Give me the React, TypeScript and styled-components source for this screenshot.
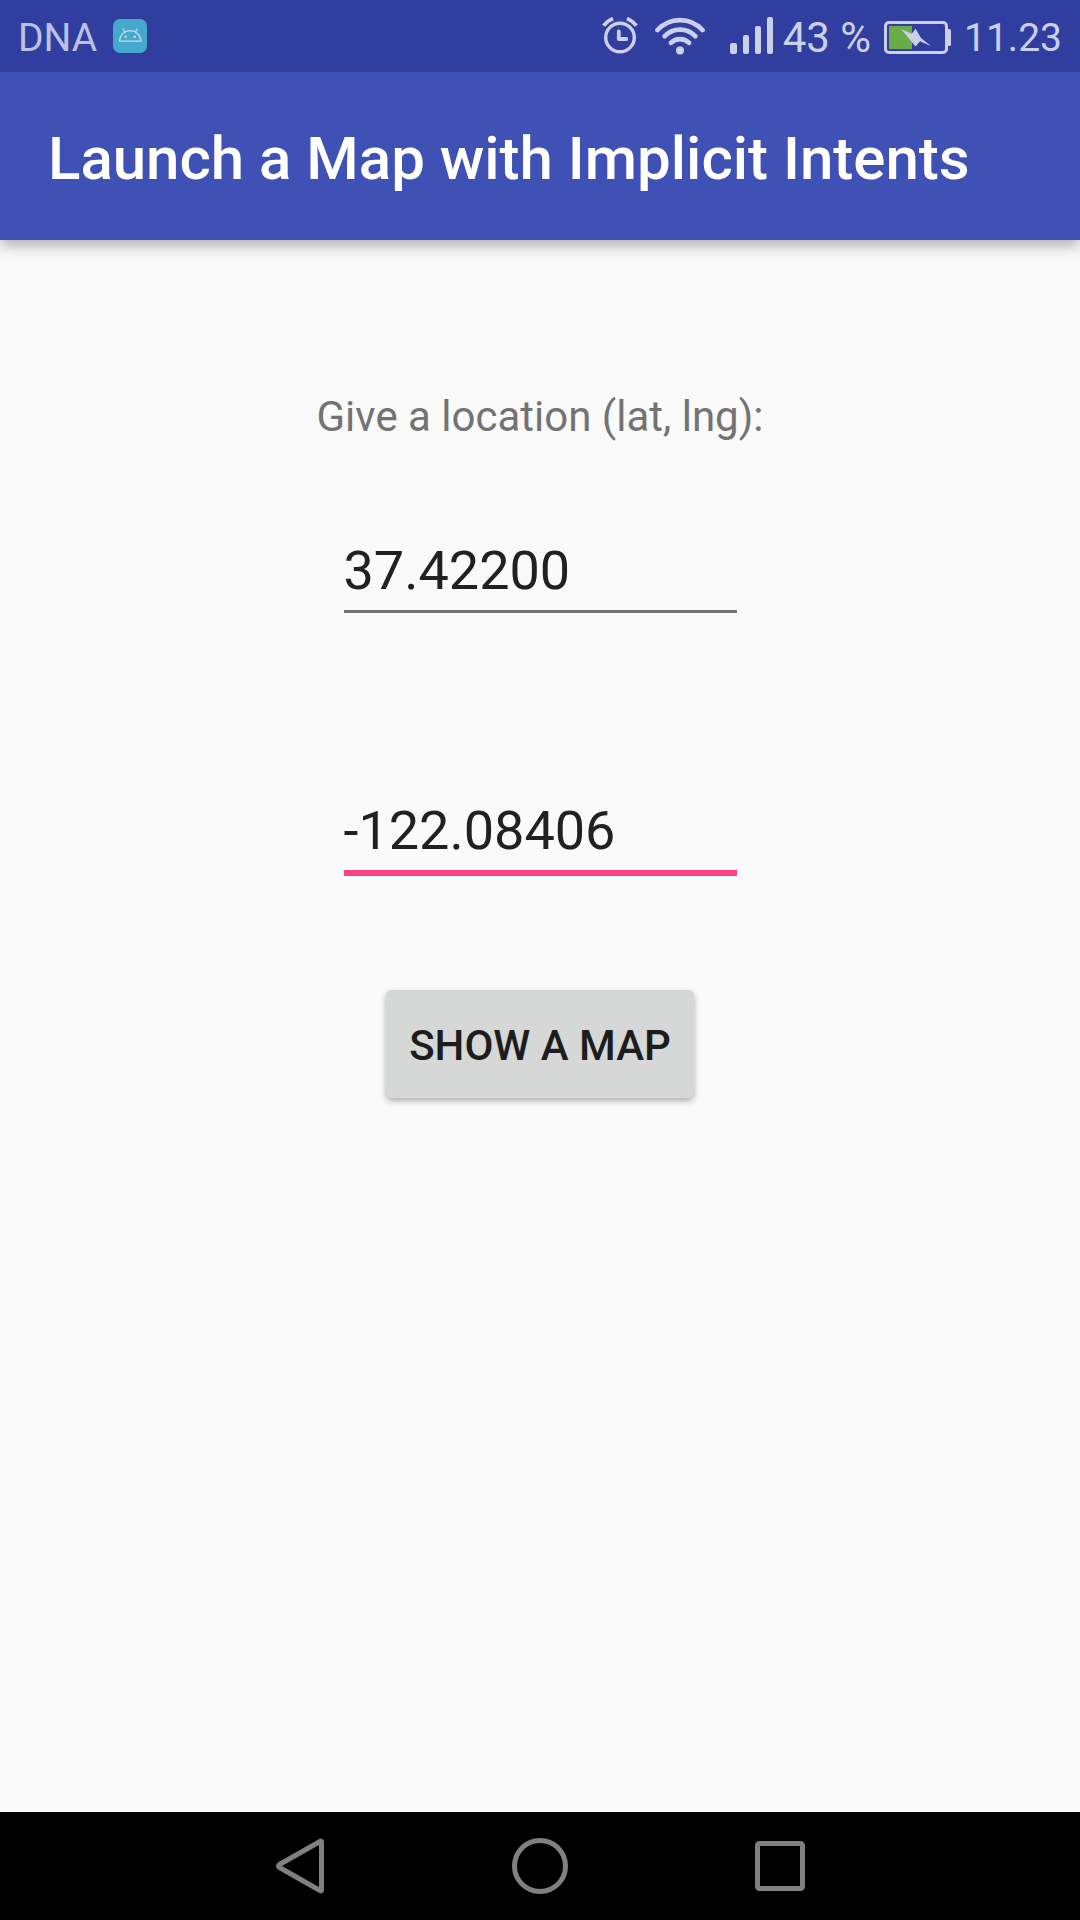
import React, { useState } from "react";
import styled, { createGlobalStyle } from "styled-components";

const GlobalStyle = createGlobalStyle`
  *, *::before, *::after { box-sizing: border-box; }
  body {
    margin: 0;
    background: #fafafa;
    font-family: Roboto, "Noto Sans", sans-serif;
  }
`;

const Screen = styled.div`
  display: flex;
  flex-direction: column;
  min-height: 100vh;
`;

const StatusBar = styled.div`
  position: relative;
  z-index: 1;
  display: flex;
  align-items: center;
  justify-content: space-between;
  height: 72px;
  padding: 0 18px;
  background: #303f9f;
  color: #cbcfe7;
`;

const StatusGroup = styled.div<{ $gap: number }>`
  display: flex;
  align-items: center;
  gap: ${(p) => p.$gap}px;
`;

const StatusText = styled.span<{ $size: number; $dim?: boolean }>`
  padding-top: 4px;
  font-size: ${(p) => p.$size}px;
  line-height: 48px;
  white-space: nowrap;
  color: ${(p) => (p.$dim ? "#bcc1e2" : "#cbcfe7")};
`;

const AppBar = styled.header`
  display: flex;
  align-items: center;
  height: 168px;
  padding: 6px 48px 0;
  background: #3f51b5;
  box-shadow: 0 5px 14px rgba(0, 0, 0, 0.32);
`;

const Title = styled.h1`
  margin: 0;
  font-size: 60px;
  font-weight: 500;
  line-height: 72px;
  color: #fff;
`;

const Form = styled.form`
  display: flex;
  flex: 1;
  flex-direction: column;
  align-items: center;
  padding-top: 153px;
`;

const Label = styled.label`
  margin-bottom: 98px;
  font-size: 42px;
  line-height: 48px;
  color: #737373;
`;

const Field = styled.input<{ $active?: boolean; $space: number }>`
  width: 393px;
  height: ${(p) => (p.$active ? 77 : 74)}px;
  margin: 0 0 ${(p) => p.$space}px;
  padding: 0 0 9px;
  border: 0;
  border-bottom: ${(p) => (p.$active ? "6px solid #ff4081" : "3px solid #737373")};
  border-radius: 0;
  outline: none;
  background: transparent;
  font-family: inherit;
  font-size: 54px;
  line-height: 62px;
  color: #212121;
`;

const RaisedButton = styled.button`
  height: 108px;
  padding: 4px 23px 0;
  border: 0;
  border-radius: 6px;
  background: #d6d7d7;
  box-shadow: 0 3px 6px rgba(0, 0, 0, 0.3);
  font-family: inherit;
  font-size: 42px;
  font-weight: 500;
  line-height: 48px;
  color: #1d1d1d;
`;

const NavBar = styled.nav`
  display: grid;
  grid-template-columns: repeat(3, 1fr);
  height: 108px;
  padding: 0 calc(100% / 6);
  background: #000;
`;

const NavButton = styled.button`
  display: flex;
  align-items: center;
  justify-content: center;
  padding: 0;
  border: 0;
  background: none;
  color: #808080;
`;

const NavIcon = styled.svg`
  width: 60px;
  height: 60px;
  fill: none;
  stroke: currentColor;
  stroke-width: 5;
`;

const Glyph = styled.svg`
  display: block;
  flex: none;
`;

const DebugIcon = () => (
  <Glyph width="34" height="34" viewBox="0 0 34 34" fill="none" stroke="#c5dcec" strokeWidth="1.2">
    <rect width="34" height="34" rx="7" fill="#45a9cb" stroke="none" />
    <path d="M6.5 22.2C7 15.5 11.5 11.7 17.2 11.7S27.5 15.5 28 22.2Z" />
    <path d="M9.8 9.5 11.8 13M24.5 9.5 22.5 13" />
    <circle cx="12.7" cy="17.7" r="1.2" fill="#c5dcec" stroke="none" />
    <circle cx="21.7" cy="17.7" r="1.2" fill="#c5dcec" stroke="none" />
  </Glyph>
);

const AlarmIcon = () => (
  <Glyph width="36" height="38" viewBox="0 0 36 38" fill="none" stroke="currentColor">
    <circle cx="18" cy="20.5" r="14.3" strokeWidth="3.4" />
    <path d="M16.8 14.5V22H24.3" strokeWidth="3.8" strokeLinecap="round" strokeLinejoin="round" />
    <path d="M1.6 8.7Q5 4 11 1.5M34.4 8.7Q31 4 25 1.5" strokeWidth="3.8" />
  </Glyph>
);

const WifiIcon = () => (
  <Glyph width="50" height="38" viewBox="0 0 50 38" fill="none" stroke="currentColor" strokeWidth="4.8" strokeLinecap="round">
    <path d="M2.5 13A30.4 30.4 0 0 1 47.5 13" />
    <path d="M9.7 19.2A21.3 21.3 0 0 1 40.3 19.2" />
    <path d="M16 25.8A13 13 0 0 1 34 25.8" />
    <circle cx="25" cy="33.5" r="4" fill="currentColor" stroke="none" />
  </Glyph>
);

const SignalIcon = () => (
  <Glyph width="43" height="38" viewBox="0 0 43 38" fill="currentColor">
    <rect x="0" y="26" width="7" height="11" rx="2" />
    <rect x="13" y="18" width="6" height="19" rx="2" />
    <rect x="25" y="9" width="6" height="28" rx="2" />
    <rect x="37" y="0" width="6" height="37" rx="2" />
  </Glyph>
);

const BatteryIcon = () => (
  <Glyph width="67" height="36" viewBox="0 -3 67 36" fill="currentColor">
    <rect x="1.5" y="1.5" width="61" height="30" rx="3.5" fill="none" stroke="currentColor" strokeWidth="3" />
    <path d="M63 8h2.5q1.5 0 1.5 1.5v14q0 1.5-1.5 1.5H63z" />
    <rect x="5" y="5" width="23" height="23" fill="#6aac48" />
    <path d="M17 8 27.700 12.700 31.700 7.700 37 17 47 25 36 20.300 31.500 25.500 26 18.700Z" />
  </Glyph>
);

export default function App() {
  const [lat, setLat] = useState("37.42200");
  const [lng, setLng] = useState("-122.08406");

  return (
    <Screen>
      <GlobalStyle />
      <StatusBar>
        <StatusGroup $gap={16}>
          <StatusText $size={39} $dim>DNA</StatusText>
          <DebugIcon />
        </StatusGroup>
        <StatusGroup $gap={25}>
          <StatusGroup $gap={17}>
            <AlarmIcon />
            <WifiIcon />
          </StatusGroup>
          <StatusGroup $gap={13}>
            <StatusGroup $gap={10}>
              <SignalIcon />
              <StatusText $size={42}>43 %</StatusText>
            </StatusGroup>
            <BatteryIcon />
            <StatusText $size={39}>11.23</StatusText>
          </StatusGroup>
        </StatusGroup>
      </StatusBar>
      <AppBar>
        <Title>Launch a Map with Implicit Intents</Title>
      </AppBar>
      <Form onSubmit={(e) => e.preventDefault()}>
        <Label htmlFor="lat">Give a location (lat, lng):</Label>
        <Field id="lat" $space={186} value={lat} onChange={(e) => setLat(e.target.value)} />
        <Field
          aria-label="Longitude"
          $active
          $space={114}
          value={lng}
          onChange={(e) => setLng(e.target.value)}
        />
        <RaisedButton type="submit">SHOW A MAP</RaisedButton>
      </Form>
      <NavBar>
        <NavButton aria-label="Back">
          <NavIcon viewBox="0 0 60 60" strokeLinejoin="round">
            <path d="M51.500 6V54Q51.500 55.500 50 54.500L9.500 31.500Q7.500 30 9.500 28.500L50 5.500Q51.500 4.500 51.500 6Z" />
          </NavIcon>
        </NavButton>
        <NavButton aria-label="Home">
          <NavIcon viewBox="0 0 60 60">
            <circle cx="30" cy="30" r="25.5" />
          </NavIcon>
        </NavButton>
        <NavButton aria-label="Recent apps">
          <NavIcon viewBox="0 0 60 60">
            <rect x="7.5" y="7.5" width="45" height="45" rx="2" />
          </NavIcon>
        </NavButton>
      </NavBar>
    </Screen>
  );
}
